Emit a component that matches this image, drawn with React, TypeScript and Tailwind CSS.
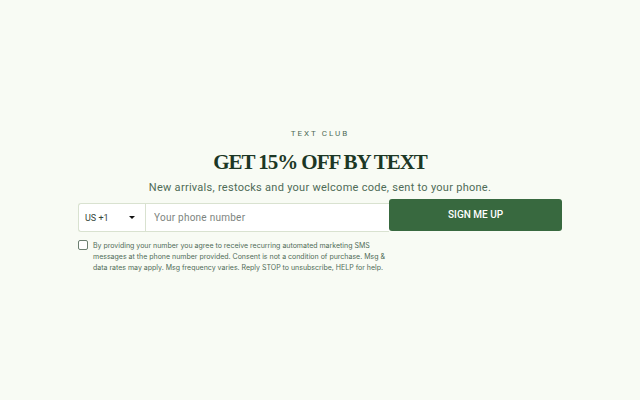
import { useState } from 'react'

const countryCodes = [
  { value: 'us', label: 'US +1' },
  { value: 'gb', label: 'GB +44' },
  { value: 'au', label: 'AU +61' },
]

export default function App() {
  const [country, setCountry] = useState('us')
  const [phone, setPhone] = useState('')
  const [consent, setConsent] = useState(false)

  return (
    <main className="min-h-screen flex items-center justify-center bg-[#f8fbf4] px-4 font-['Roboto',sans-serif] text-[#4f6b57]">
      <section className="w-full max-w-[484px]">
        {/* Heading */}
        <header className="text-center">
          <p className="text-[8px] leading-3 tracking-[2px]">TEXT CLUB</p>
          <h1 className="mt-2 text-[21px] leading-7 font-bold tracking-tighter text-[#1c3725] font-['Liberation_Serif',serif]">
            GET 15% OFF BY TEXT
          </h1>
          <p className="mt-1 text-[11px] leading-4 tracking-wide">
            New arrivals, restocks and your welcome code, sent to your phone.
          </p>
        </header>

        <form
          className="mt-[3px] grid grid-cols-[9fr_5fr] items-start"
          onSubmit={(e) => e.preventDefault()}
        >
          <div className="pt-1">
            {/* Country code and number */}
            <div className="flex h-[29px] rounded-l-[3px] border border-r-0 border-[#d9e2d0] bg-white">
              <div className="relative w-[67px] border-r border-[#d9e2d0]">
                <select
                  aria-label="Country code"
                  value={country}
                  onChange={(e) => setCountry(e.target.value)}
                  className="h-full w-full appearance-none bg-transparent pl-1.5 text-[9px] text-[#34453a] outline-none"
                >
                  {countryCodes.map((c) => (
                    <option key={c.value} value={c.value}>{c.label}</option>
                  ))}
                </select>
                <svg
                  viewBox="0 0 6 3"
                  className="pointer-events-none absolute right-2.5 top-3 h-[3px] w-1.5 fill-[#111111]"
                  aria-hidden="true"
                >
                  <path d="M0 0h6L3 3z" />
                </svg>
              </div>
              <input
                type="tel"
                aria-label="Your phone number"
                placeholder="Your phone number"
                value={phone}
                onChange={(e) => setPhone(e.target.value)}
                className="min-w-0 flex-1 bg-transparent px-2 text-[10px] tracking-wide text-[#34453a] outline-none placeholder:text-[#7d847e]"
              />
            </div>

            {/* Consent */}
            <label className="mt-2 flex items-start gap-[5px]">
              <input
                type="checkbox"
                checked={consent}
                onChange={(e) => setConsent(e.target.checked)}
                className="size-2.5 shrink-0 appearance-none rounded-[2px] border border-[#6c7f70] bg-white checked:bg-[#38693f]"
              />
              <span className="whitespace-nowrap text-[7px] leading-[11px] font-['Inter',sans-serif]">
                By providing your number you agree to receive recurring automated marketing SMS
                <br />
                messages at the phone number provided. Consent is not a condition of purchase. Msg &amp;
                <br />
                data rates may apply. Msg frequency varies. Reply STOP to unsubscribe, HELP for help.
              </span>
            </label>
          </div>

          <button
            type="submit"
            className="h-8 rounded-[3px] bg-[#38693f] text-[10px] font-medium text-white hover:bg-[#2e5734]"
          >
            SIGN ME UP
          </button>
        </form>
      </section>
    </main>
  )
}
